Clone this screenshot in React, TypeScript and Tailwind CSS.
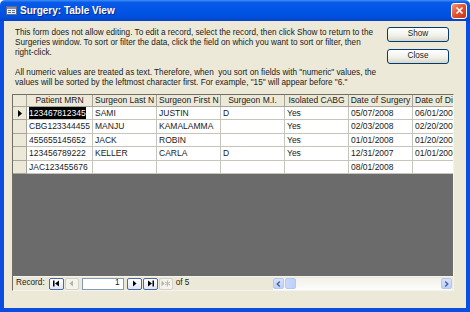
const columns = [
  { label: "Patient MRN", cls: "w-[66px] justify-center" },
  { label: "Surgeon Last N", cls: "w-[64px] justify-start pl-[2px]" },
  { label: "Surgeon First N", cls: "w-[64px] justify-start pl-[2px]" },
  { label: "Surgeon M.I.", cls: "w-[64px] justify-center" },
  { label: "Isolated CABG", cls: "w-[64px] justify-center" },
  { label: "Date of Surgery", cls: "w-[64px] justify-center" },
  { label: "Date of Discharge", cls: "w-[64px] justify-start pl-[2px]" },
];

const widths = ["w-[66px]", "w-[64px]", "w-[64px]", "w-[64px]", "w-[64px]", "w-[64px]", "w-[64px]"];

const records = [
  ["123467812345", "SAMI", "JUSTIN", "D", "Yes", "05/07/2008", "06/01/2008"],
  ["CBG123344455", "MANJU", "KAMALAMMA", "", "Yes", "02/03/2008", "02/20/2008"],
  ["455655145652", "JACK", "ROBIN", "", "Yes", "01/01/2008", "01/20/2008"],
  ["123456789222", "KELLER", "CARLA", "D", "Yes", "12/31/2007", "01/01/2008"],
  ["JAC123455676", "", "", "", "", "08/01/2008", ""],
];

const rowHeights = ["h-[13px]", "h-[14px]", "h-[13px]", "h-[14px]", "h-[13px]"];

function XpButton({ label }: { label: string }) {
  return (
    <button className="flex h-[15px] w-[62px] shrink-0 items-center justify-center rounded-[3px] border border-[#003c74] bg-[linear-gradient(to_bottom,#ffffff,#f0f0ea_60%,#d8d5c6)] text-[8.2px] text-[#1a1a1a]">
      {label}
    </button>
  );
}

function NavButton({ kind, disabled }: { kind: "first" | "prev" | "next" | "last" | "new"; disabled?: boolean }) {
  const c = disabled ? "#b5b3a8" : "#000000";
  return (
    <div
      className={
        disabled
          ? "flex h-[12px] w-[14px] items-center justify-center rounded-[2px] border border-[#d4d2c6] bg-[#f4f3ee]"
          : "flex h-[12px] w-[15px] items-center justify-center rounded-[2px] border border-[#4a6aa5] bg-[linear-gradient(to_bottom,#ffffff,#dfe6f4)]"
      }
    >
      <svg width="9" height="7" viewBox="0 0 9 7">
        {kind === "first" && (
          <>
            <rect x="1" y="0.5" width="1.5" height="6" fill={c} />
            <path d="M7 0.5 L3 3.5 L7 6.5 Z" fill={c} />
          </>
        )}
        {kind === "prev" && <path d="M6 0.5 L2.5 3.5 L6 6.5 Z" fill={c} />}
        {kind === "next" && <path d="M3 0.5 L6.5 3.5 L3 6.5 Z" fill={c} />}
        {kind === "last" && (
          <>
            <path d="M2 0.5 L6 3.5 L2 6.5 Z" fill={c} />
            <rect x="6.5" y="0.5" width="1.5" height="6" fill={c} />
          </>
        )}
        {kind === "new" && (
          <>
            <path d="M0.5 0.5 L3.5 3.5 L0.5 6.5 Z" fill={c} />
            <path d="M6.5 0.5 V6.5 M4 2 L9 5 M9 2 L4 5" stroke={c} strokeWidth="0.9" />
          </>
        )}
      </svg>
    </div>
  );
}

function ScrollArrow({ dir }: { dir: "left" | "right" }) {
  return (
    <div className="flex h-[11px] w-[11px] items-center justify-center rounded-[2px] border border-[#b4c8f6] bg-[linear-gradient(to_bottom,#d7e3fd,#bcd0fa)]">
      <svg width="5" height="6" viewBox="0 0 5 6">
        <path
          d={dir === "left" ? "M3.8 0.6 L1.3 3 L3.8 5.4" : "M1.2 0.6 L3.7 3 L1.2 5.4"}
          fill="none"
          stroke="#4d6185"
          strokeWidth="1.4"
        />
      </svg>
    </div>
  );
}

export default function App() {
  return (
    <div className="flex h-[312px] w-[470px] flex-col bg-white font-['Liberation_Sans',Arial,sans-serif] text-[#1a1a1a]">
      {/* title bar */}
      <div className="flex h-[21px] shrink-0 items-center rounded-t-[5px] bg-[linear-gradient(to_bottom,#3c8ef7_0%,#0a5ae8_12%,#0255e6_45%,#0150e0_80%,#0542c4_100%)] pl-[6px] pr-[3px]">
        <svg width="11" height="9" viewBox="0 0 11 9" className="shrink-0">
          <rect x="0.5" y="0.5" width="10" height="8" fill="#e9eef8" stroke="#5a6d8c" />
          <rect x="1" y="1" width="9" height="2" fill="#7b90b8" />
          <rect x="2" y="4" width="3" height="1" fill="#5a6d8c" />
          <rect x="6" y="4" width="3" height="1" fill="#5a6d8c" />
          <rect x="2" y="6" width="3" height="1" fill="#5a6d8c" />
          <rect x="6" y="6" width="3" height="1" fill="#5a6d8c" />
        </svg>
        <span className="ml-[3px] text-[10px] font-bold text-white [text-shadow:1px_1px_0_#0a2a8a]">
          Surgery: Table View
        </span>
        <div className="ml-auto flex h-[16px] w-[16px] items-center justify-center rounded-[3px] border border-white bg-[linear-gradient(135deg,#f2977c,#e2502f_50%,#c53515)]">
          <svg width="9" height="9" viewBox="0 0 9 9">
            <path d="M1.5 1.5 L7.5 7.5 M7.5 1.5 L1.5 7.5" stroke="#ffffff" strokeWidth="1.7" />
          </svg>
        </div>
      </div>

      {/* window body */}
      <div className="flex flex-1 flex-col border-x-[4px] border-b-[4px] border-[#0b4de0] bg-[#ece9d8]">
        <div className="flex h-[73px] shrink-0">
          <div className="ml-[11px] pt-[7px] text-[8.2px] leading-[10px] whitespace-nowrap">
            <div>This form does not allow editing. To edit a record, select the record, then click Show to return to the</div>
            <div>Surgeries window. To sort or filter the data, click the field on which you want to sort or filter, then</div>
            <div>right-click.</div>
            <div className="h-[10px]" />
            <div>All numeric values are treated as text. Therefore, when&nbsp; you sort on fields with "numeric" values, the</div>
            <div>values will be sorted by the leftmost character first. For example, "15" will appear before "6."</div>
          </div>
          <div className="ml-auto mr-[17px] flex shrink-0 flex-col gap-[7px] pt-[6px]">
            <XpButton label="Show" />
            <XpButton label="Close" />
          </div>
        </div>

        {/* datasheet */}
        <div className="ml-[8px] flex h-[197px] w-[442px] flex-col overflow-hidden border border-t-[#716f64] border-l-[#716f64] border-r-[#f5f4ee] border-b-[#f5f4ee] text-[8.5px]">
          <div className="flex h-[12px] shrink-0">
            <div className="h-full w-[14px] shrink-0 border-r border-b border-[#a8a69a] bg-[#ece9d8]" />
            {columns.map((c) => (
              <div
                key={c.label}
                className={`${c.cls} flex h-full shrink-0 items-center overflow-hidden whitespace-nowrap border-r border-b border-[#a8a69a] bg-[#ece9d8] leading-none`}
              >
                {c.label}
              </div>
            ))}
          </div>
          {records.map((r, i) => (
            <div key={i} className={`${rowHeights[i]} flex shrink-0`}>
              <div className="flex h-full w-[14px] shrink-0 items-center justify-center border-r border-b border-[#a8a69a] bg-[#ece9d8]">
                {i === 0 && (
                  <svg width="4" height="7" viewBox="0 0 4 7">
                    <path d="M0 0 L4 3.5 L0 7 Z" fill="#000" />
                  </svg>
                )}
              </div>
              {r.map((v, j) => (
                <div
                  key={j}
                  className={`${widths[j]} flex h-full shrink-0 items-center overflow-hidden whitespace-nowrap border-r border-b border-[#c6c4bb] bg-white pl-[2px] leading-none`}
                >
                  {i === 0 && j === 0 ? (
                    <span className="bg-black py-[1.5px] text-white">{v}</span>
                  ) : (
                    v
                  )}
                </div>
              ))}
            </div>
          ))}
          <div className="flex-1 bg-[#6b6b6b]" />

          {/* navigation bar */}
          <div className="flex h-[14px] shrink-0 items-center border-t border-[#f4f3ee] bg-[#ece9d8] pl-[3px] text-[8.2px]">
            <span className="leading-none">Record:</span>
            <div className="ml-[4px] flex items-center gap-[1px]">
              <NavButton kind="first" />
              <NavButton kind="prev" disabled />
            </div>
            <div className="ml-[3px] flex h-[12px] w-[42px] items-center justify-end border border-[#7f9db9] bg-white pr-[3px] leading-none">
              1
            </div>
            <div className="ml-[3px] flex items-center gap-[1px]">
              <NavButton kind="next" />
              <NavButton kind="last" />
              <NavButton kind="new" disabled />
            </div>
            <span className="ml-[3px] leading-none">of 5</span>

            <div className="ml-auto mr-[1px] flex h-[12px] w-[179px] items-center bg-[linear-gradient(to_bottom,#f3f1ea,#fdfdfb)]">
              <ScrollArrow dir="left" />
              <div className="ml-[1px] h-[11px] w-[11px] rounded-[2px] border border-[#b4c8f6] bg-[linear-gradient(to_right,#c9d8fc,#bdd0fa)]" />
              <div className="flex-1" />
              <ScrollArrow dir="right" />
            </div>
          </div>
        </div>
      </div>
    </div>
  );
}
